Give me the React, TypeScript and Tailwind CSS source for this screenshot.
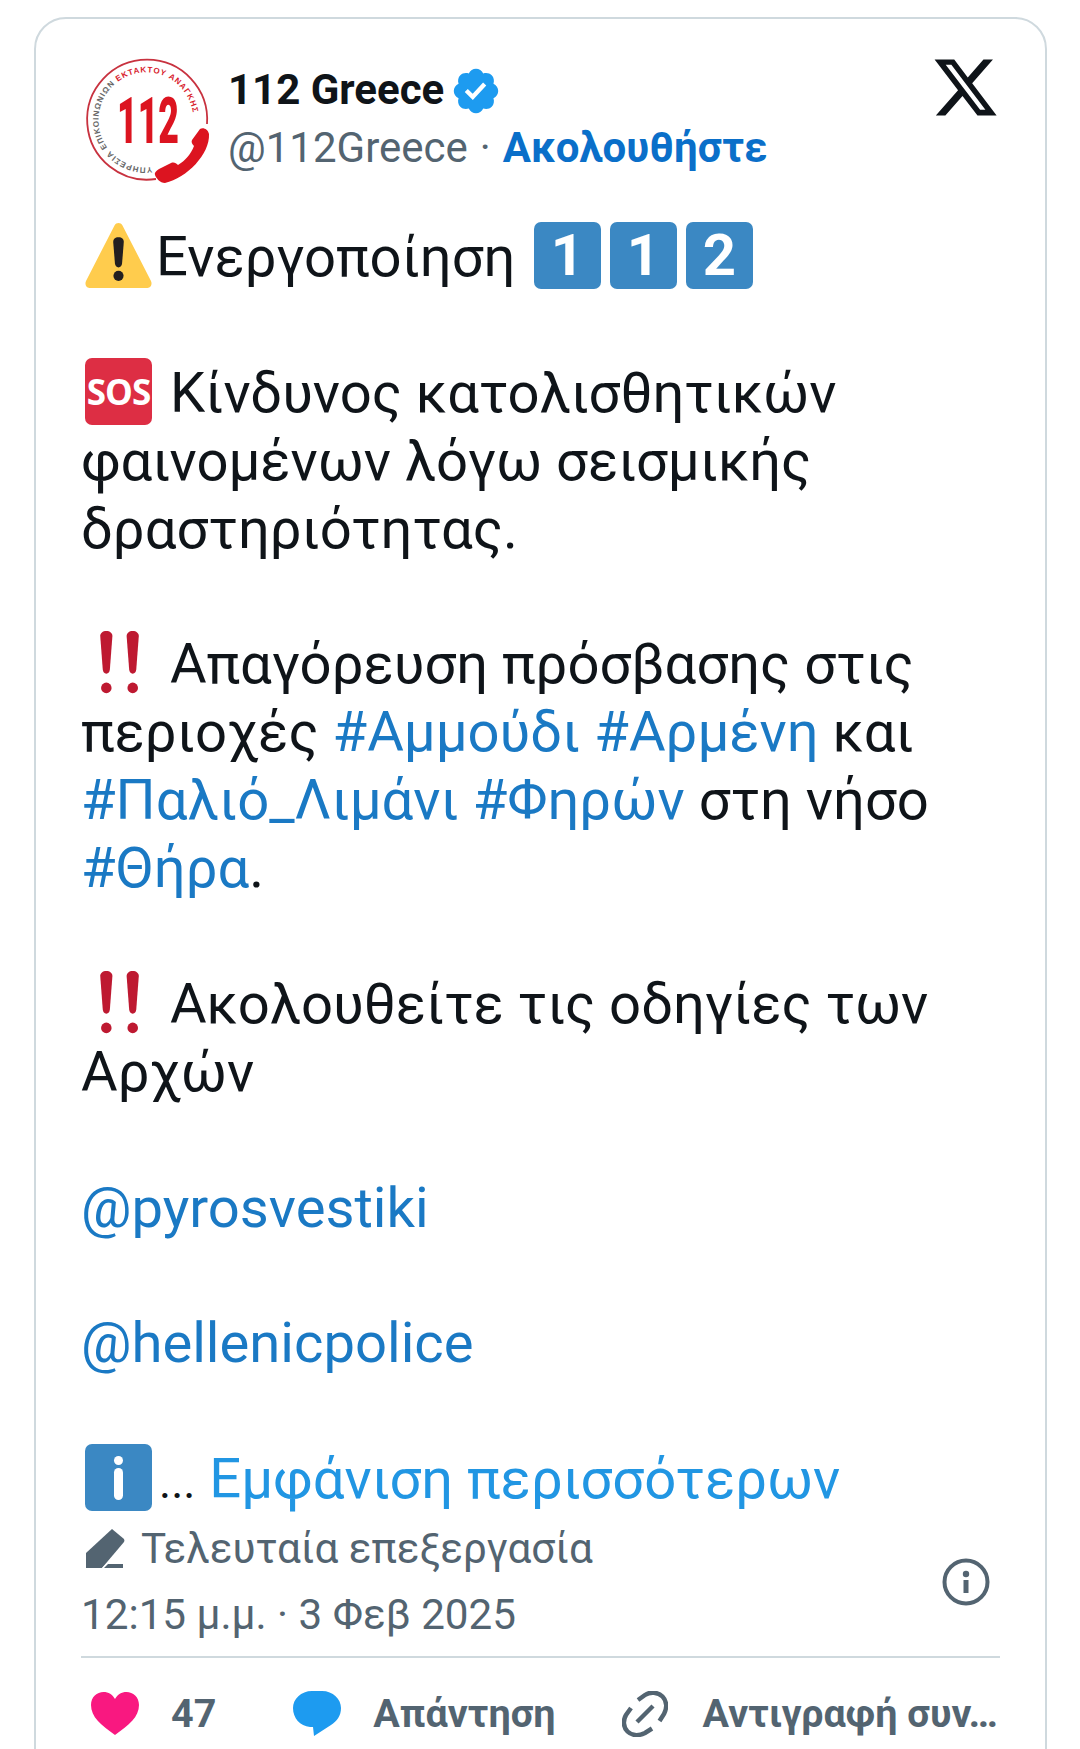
import React from "react";

const Key = ({ d }: { d: string }) => (
  <span className="inline-block overflow-hidden -my-[10px] w-[67px] h-[67px] mx-[4.5px] align-[-3px] rounded-[7px] bg-[#3b88c3] text-white text-center font-['Roboto',sans-serif] font-bold text-[58px] leading-[67px]">{d}</span>
);

const Bang = () => (
  <svg viewBox="0 0 66 66" className="inline-block -my-[10px] w-[67px] h-[67px] mx-[4px] align-[-3px]">
    <g fill="#be1931">
      <path d="M21 2c-3.500 0-6 2-6 5l2.500 33c.3 2.500 1.500 4 3.500 4s3.200-1.500 3.500-4l2.500-33c0-3-2.500-5-6-5z" />
      <circle cx="21" cy="58" r="5.200" />
      <path d="M47 2c-3.500 0-6 2-6 5l2.500 33c.3 2.500 1.500 4 3.500 4s3.200-1.500 3.500-4l2.500-33c0-3-2.500-5-6-5z" />
      <circle cx="47" cy="58" r="5.200" />
    </g>
  </svg>
);

const Tag = ({ children }: { children: React.ReactNode }) => <span className="text-[#1a79c4]">{children}</span>;

export default function App() {
  return (
    <div className="w-[1080px] h-[1749px] overflow-hidden bg-white font-['Roboto',sans-serif] text-[#0f1419]">
      <div className="ml-[34px] mt-[17px] w-[1013px] h-[1800px] rounded-[32px] border-2 border-[#cfd9de] pl-[45px] pr-[45px]">
        <div className="flex items-start pt-[39px]">
          <svg viewBox="0 0 126 126" className="ml-[3px] w-[126px] h-[126px] shrink-0">
            <defs>
              <path id="ring" d="M68 109A47.500 47.500 0 1 1 109.500 62" />
            </defs>
            <path d="M72 121A60 60 0 1 1 123 66" fill="none" stroke="#c8323f" strokeWidth="1.800" />
            <text fontFamily="Liberation Sans, sans-serif" fontSize="8" fontWeight="700" fill="#666">
              <textPath href="#ring" textLength="222" lengthAdjust="spacing">
                ΥΠΗΡΕΣΙΑ ΕΠΙΚΟΙΝΩΝΙΩΝ <tspan fill="#d8202c">ΕΚΤΑΚΤΟΥ ΑΝΑΓΚΗΣ</tspan>
              </textPath>
            </text>
            <text x="33" y="85" fontFamily="Roboto, sans-serif" fontWeight="900" fontSize="65" fill="#dc1420" textLength="62" lengthAdjust="spacingAndGlyphs">112</text>
            <path d="M125 76c1 20-22 44-44 49-5 0-9-5-10-8-1-2 1-4 4-6l12-6c3-1 5 0 7 2 7-4 13-11 16-19-2-2-3-4-2-6l8-11c3-2 8 0 9 5z" fill="#dc1420" />
          </svg>
          <div className="ml-[18px] flex flex-col">
            <div className="flex items-center h-[56px] mt-[4px]">
              <span className="text-[42px] leading-none font-bold">112 Greece</span>
              <svg viewBox="0 0 24 24" className="ml-[6px] mt-[1px] w-[52px] h-[52px]">
                <path fill="#1d9bf0" d="M22.250 12c0-1.430-.88-2.670-2.190-3.340.46-1.390.2-2.900-.81-3.910s-2.520-1.270-3.910-.81c-.66-1.310-1.910-2.190-3.340-2.190s-2.670.88-3.330 2.190c-1.400-.46-2.910-.2-3.920.81s-1.260 2.520-.8 3.910C2.630 9.330 1.750 10.570 1.750 12s.88 2.670 2.200 3.340c-.46 1.390-.21 2.900.8 3.910s2.520 1.260 3.910.81c.67 1.310 1.910 2.190 3.340 2.190s2.680-.88 3.340-2.190c1.390.45 2.900.2 3.910-.81s1.270-2.520.81-3.910c1.310-.67 2.190-1.910 2.190-3.340zm-11.710 4.200L6.800 12.460l1.410-1.420 2.260 2.260 4.800-5.230 1.470 1.360-6.200 6.770z" />
              </svg>
            </div>
            <div className="flex items-center h-[58px] mt-[1px] text-[42px] leading-none whitespace-nowrap">
              <span className="text-[#536471]">@112Greece</span>
              <span className="text-[#536471] mx-[12px]">·</span>
              <span className="text-[#0a6fc9] font-bold text-[42px]">Ακολουθήστε</span>
            </div>
          </div>
          <svg viewBox="0 0 24 24" className="ml-auto mr-0 mt-[-5.500px] w-[69px] h-[69px] shrink-0">
            <path fill="#0f1419" d="M18.244 2.250h3.308l-7.227 8.260 8.502 11.240H16.170l-5.214-6.817L4.990 21.750H1.680l7.730-8.835L1.254 2.250H8.080l4.713 6.231zm-1.161 17.520h1.833L7.084 4.126H5.117z" />
          </svg>
        </div>

        <div className="mt-[40px] text-[56.2px] leading-[67.9px] whitespace-nowrap">
          <div>
            <svg viewBox="0 0 66 66" className="inline-block -my-[10px] w-[67px] h-[67px] mx-[4px] align-[-3px]">
              <path fill="#ffcc4d" d="M33 1c-1.500 0-3 .8-3.800 2.200L1 58c-1.300 2.500-.3 7 3.500 7h57c3.800 0 4.800-4.500 3.500-7L36.800 3.200C36 1.800 34.500 1 33 1z" />
              <path fill="#231f20" d="M33 15c-3.600 0-5.400 2.300-5.200 5l1.700 21c.2 2.300 1.600 3.700 3.500 3.700s3.300-1.400 3.500-3.700l1.700-21c.2-2.700-1.600-5-5.200-5z" />
              <circle cx="33" cy="53" r="5" fill="#231f20" />
            </svg>
            Ενεργοποίηση <Key d="1" />
            <Key d="1" />
            <Key d="2" />
          </div>
          <div className="h-[67.9px]" />
          <div>
            <span className="inline-block overflow-hidden -my-[10px] w-[67px] h-[67px] mx-[4px] align-[-3px] rounded-[7px] bg-[#dd2e44] text-white text-center font-['Open_Sans',sans-serif] font-bold text-[35px] tracking-[-1px] leading-[67px]">SOS</span>
            {" "}Κίνδυνος κατολισθητικών
          </div>
          <div>φαινομένων λόγω σεισμικής</div>
          <div>δραστηριότητας.</div>
          <div className="h-[67.9px]" />
          <div><Bang />{" "}Απαγόρευση πρόσβασης στις</div>
          <div>περιοχές <Tag>#Αμμούδι</Tag> <Tag>#Αρμένη</Tag> και</div>
          <div><Tag>#Παλιό_Λιμάνι</Tag> <Tag>#Φηρών</Tag> στη νήσο</div>
          <div><Tag>#Θήρα</Tag>.</div>
          <div className="h-[67.9px]" />
          <div><Bang />{" "}Ακολουθείτε τις οδηγίες των</div>
          <div>Αρχών</div>
          <div className="h-[67.9px]" />
          <div><Tag>@pyrosvestiki</Tag></div>
          <div className="h-[67.9px]" />
          <div><Tag>@hellenicpolice</Tag></div>
          <div className="h-[67.9px]" />
          <div>
            <span className="inline-block overflow-hidden -my-[10px] w-[67px] h-[67px] mx-[4px] align-[-3px] rounded-[7px] bg-[#3b88c3]">
              <span className="flex flex-col items-center justify-center gap-[3px] h-full">
                <span className="w-[9px] h-[9px] rounded-full bg-white" />
                <span className="w-[9px] h-[32px] rounded-full bg-white" />
              </span>
            </span>
            <span className="ml-[3px] text-[46px]">...</span>{" "}
            <span className="text-[#2196e3]">Εμφάνιση περισσότερων</span>
          </div>
        </div>

        <div className="relative -mt-[1px]">
          <div className="flex items-center h-[66px] text-[#536471] text-[42.2px] leading-none whitespace-nowrap">
            <svg viewBox="0 0 40 40" className="ml-[5px] w-[40px] h-[40px]">
              <path fill="#536471" d="M26 0l12 10a3 3 0 0 1 0 3L16 39H0V24z" />
              <path fill="#fff" d="M15 40l6-6h20v6z" />
              <path fill="#536471" d="M22 35h15v4H18z" />
            </svg>
            <span className="ml-[15px]">Τελευταία επεξεργασία</span>
          </div>
          <div className="flex items-center h-[66px] text-[#536471] text-[42.2px] leading-none whitespace-nowrap">
            12:15 μ.μ. · 3 Φεβ 2025
          </div>
          <svg viewBox="0 0 48 48" className="absolute right-[10px] top-[42px] w-[48px] h-[48px]">
            <circle cx="24" cy="24" r="21.500" fill="none" stroke="#536471" strokeWidth="4" />
            <circle cx="24" cy="16" r="3.200" fill="#536471" />
            <rect x="21.500" y="22" width="5" height="13" fill="#536471" />
          </svg>
        </div>

        <div className="mt-[8px] border-t-2 border-[#cfd9de] flex items-center pt-[33px] text-[#536471] font-bold text-[39.5px] leading-none whitespace-nowrap">
          <svg viewBox="0 0 48 44" className="ml-[10px] w-[48px] h-[44px] shrink-0">
            <path fill="#f91880" d="M24 43C10 33 0 25 0 13 0 5 6 0 12.500 0 17.500 0 21.500 2.500 24 7c2.500-4.500 6.500-7 11.500-7C42 0 48 5 48 13c0 12-10 20-24 30z" />
          </svg>
          <span className="ml-[32px]">47</span>
          <svg viewBox="0 0 48 46" className="ml-[77px] w-[48px] h-[46px] shrink-0">
            <path fill="#1d9bf0" d="M19 0h10c11 0 19 8 19 17 0 8-4 13-10 17l-17 11-1-9h-3C7 35 0 27 0 17 0 8 8 0 19 0z" />
          </svg>
          <span className="ml-[32px]">Απάντηση</span>
          <svg viewBox="0 0 46 46" className="ml-[66px] w-[46px] h-[46px] shrink-0" fill="none" stroke="#536471" strokeWidth="4.500">
            <path d="M16 9l7-5c5-3.500 13-3 17.500 1.500S45 17 42 23l-4.500 7" />
            <path d="M9 17l-5 7C1 29 1 36 5.500 40.500S17 45 23 42l7-4.500" />
            <path d="M15 31l16-16" />
          </svg>
          <span className="ml-[35px]">Αντιγραφή συν…</span>
        </div>
      </div>
    </div>
  );
}
